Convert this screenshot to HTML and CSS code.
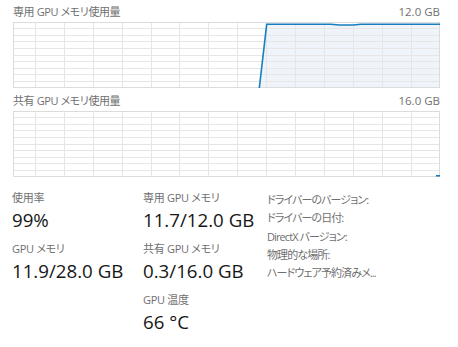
FILE: index.html
```html
<!DOCTYPE html>
<html lang="ja">
<head>
<meta charset="utf-8">
<title>GPU</title>
<link rel="stylesheet" href="styles.css">
</head>
<body>
<div class="page">
  <section class="chart-block">
    <div class="chart-head"><span>専用 GPU メモリ使用量</span><span class="max">12.0 GB</span></div>
    <svg class="chart" width="427" height="66" viewBox="0 0 427 66">
      <polygon class="fill" points="246.3,66 253.7,2.3 318,2.3 326,3 340,3 348,2.3 427,2.3 427,66"/>
      <g class="grid">
        <line x1="0" y1="6.6" x2="427" y2="6.6"/>
        <line x1="0" y1="13.2" x2="427" y2="13.2"/>
        <line x1="0" y1="19.8" x2="427" y2="19.8"/>
        <line x1="0" y1="26.4" x2="427" y2="26.4"/>
        <line x1="0" y1="33" x2="427" y2="33"/>
        <line x1="0" y1="39.6" x2="427" y2="39.6"/>
        <line x1="0" y1="46.2" x2="427" y2="46.2"/>
        <line x1="0" y1="52.8" x2="427" y2="52.8"/>
        <line x1="0" y1="59.4" x2="427" y2="59.4"/>
        <line x1="22.5" y1="0" x2="22.5" y2="66"/>
        <line x1="51.5" y1="0" x2="51.5" y2="66"/>
        <line x1="80.5" y1="0" x2="80.5" y2="66"/>
        <line x1="109.5" y1="0" x2="109.5" y2="66"/>
        <line x1="138.5" y1="0" x2="138.5" y2="66"/>
        <line x1="166.5" y1="0" x2="166.5" y2="66"/>
        <line x1="195.5" y1="0" x2="195.5" y2="66"/>
        <line x1="224.5" y1="0" x2="224.5" y2="66"/>
        <line x1="253.5" y1="0" x2="253.5" y2="66"/>
        <line x1="282.5" y1="0" x2="282.5" y2="66"/>
        <line x1="311.5" y1="0" x2="311.5" y2="66"/>
        <line x1="340.5" y1="0" x2="340.5" y2="66"/>
        <line x1="369.5" y1="0" x2="369.5" y2="66"/>
        <line x1="398.5" y1="0" x2="398.5" y2="66"/>
        <rect x="0.5" y="0.5" width="426" height="65"/>
      </g>
      <polyline class="line" points="246.3,66 253.7,2.3 318,2.3 326,3 340,3 348,2.3 427,2.3"/>
    </svg>
  </section>
  <section class="chart-block second">
    <div class="chart-head"><span>共有 GPU メモリ使用量</span><span class="max">16.0 GB</span></div>
    <svg class="chart" width="427" height="66" viewBox="0 0 427 66">
      <g class="grid">
        <line x1="0" y1="6.6" x2="427" y2="6.6"/>
        <line x1="0" y1="13.2" x2="427" y2="13.2"/>
        <line x1="0" y1="19.8" x2="427" y2="19.8"/>
        <line x1="0" y1="26.4" x2="427" y2="26.4"/>
        <line x1="0" y1="33" x2="427" y2="33"/>
        <line x1="0" y1="39.6" x2="427" y2="39.6"/>
        <line x1="0" y1="46.2" x2="427" y2="46.2"/>
        <line x1="0" y1="52.8" x2="427" y2="52.8"/>
        <line x1="0" y1="59.4" x2="427" y2="59.4"/>
        <line x1="22.5" y1="0" x2="22.5" y2="66"/>
        <line x1="51.5" y1="0" x2="51.5" y2="66"/>
        <line x1="80.5" y1="0" x2="80.5" y2="66"/>
        <line x1="109.5" y1="0" x2="109.5" y2="66"/>
        <line x1="138.5" y1="0" x2="138.5" y2="66"/>
        <line x1="166.5" y1="0" x2="166.5" y2="66"/>
        <line x1="195.5" y1="0" x2="195.5" y2="66"/>
        <line x1="224.5" y1="0" x2="224.5" y2="66"/>
        <line x1="253.5" y1="0" x2="253.5" y2="66"/>
        <line x1="282.5" y1="0" x2="282.5" y2="66"/>
        <line x1="311.5" y1="0" x2="311.5" y2="66"/>
        <line x1="340.5" y1="0" x2="340.5" y2="66"/>
        <line x1="369.5" y1="0" x2="369.5" y2="66"/>
        <line x1="398.5" y1="0" x2="398.5" y2="66"/>
        <rect x="0.5" y="0.5" width="426" height="65"/>
      </g>
      <polyline class="line" points="423,64.8 427,64.8"/>
    </svg>
  </section>
  <section class="stats">
    <div class="stat-col col-a">
      <div class="stat"><div class="label">使用率</div><div class="value">99%</div></div>
      <div class="stat"><div class="label">GPU メモリ</div><div class="value">11.9/28.0 GB</div></div>
    </div>
    <div class="stat-col col-b">
      <div class="stat"><div class="label">専用 GPU メモリ</div><div class="value">11.7/12.0 GB</div></div>
      <div class="stat"><div class="label">共有 GPU メモリ</div><div class="value">0.3/16.0 GB</div></div>
      <div class="stat"><div class="label">GPU 温度</div><div class="value">66 °C</div></div>
    </div>
    <ul class="props">
      <li>ドライバーのバージョン:</li>
      <li>ドライバーの日付:</li>
      <li>DirectX バージョン:</li>
      <li>物理的な場所:</li>
      <li>ハードウェア予約済みメ...</li>
    </ul>
  </section>
</div>
</body>
</html>
```

FILE: styles.css
```css
html, body {
  margin: 0;
  padding: 0;
  background: #ffffff;
}
body {
  font-family: "Open Sans", "Noto Sans CJK JP", sans-serif;
  font-feature-settings: "palt";
  color: #1a1a1a;
}
.page {
  width: 458px;
  height: 347px;
  padding: 4px 18px 0 13px;
  box-sizing: border-box;
  overflow: hidden;
}
.chart-head {
  display: flex;
  justify-content: space-between;
  font-size: 11px;
  letter-spacing: -0.4px;
  line-height: 16px;
  color: #707070;
}
.chart-head .max {
  font-size: 11.5px;
  letter-spacing: 0;
}
.chart {
  display: block;
  margin-top: 2px;
}
.second {
  margin-top: 5px;
}
.grid line, .grid rect {
  stroke: #e6e6e6;
  stroke-width: 1;
  fill: none;
  shape-rendering: crispEdges;
}
.grid rect {
  stroke: #dcdcdc;
}
.fill {
  fill: #eef4f9;
}
.line {
  fill: none;
  stroke: #177fc1;
  stroke-width: 1.6;
}
.stats {
  display: flex;
  margin-top: 13px;
  margin-left: -1px;
}
.stat-col {
  display: flex;
  flex-direction: column;
  gap: 9px;
}
.col-a {
  width: 131px;
}
.col-b {
  width: 124px;
}
.label {
  font-size: 11px;
  letter-spacing: -0.3px;
  line-height: 16px;
  color: #707070;
}
.value {
  margin-top: 2px;
  font-size: 18.7px;
  line-height: 24px;
  color: #161616;
}
.props {
  list-style: none;
  margin: 1px 0 0;
  padding: 0;
  font-size: 11px;
  letter-spacing: -0.9px;
  line-height: 18.25px;
  color: #707070;
}
```
